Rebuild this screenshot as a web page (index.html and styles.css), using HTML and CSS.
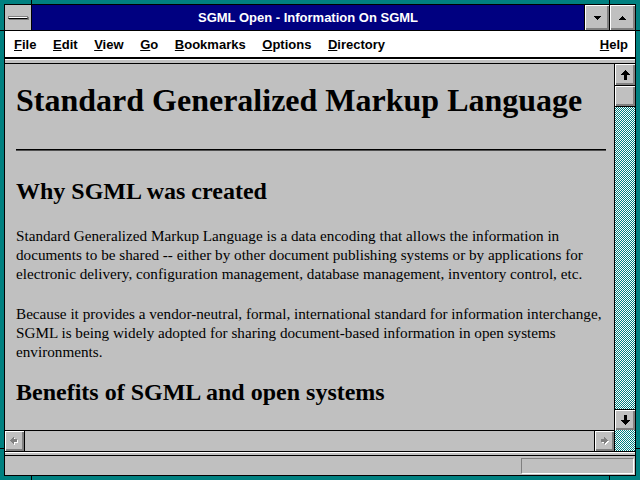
FILE: index.html
```html
<!DOCTYPE html>
<html>
<head>
<meta charset="utf-8">
<title>SGML Open - Information On SGML</title>
<link rel="stylesheet" href="styles.css">
</head>
<body>
<div class="frame">
  <span class="mark mark-v mark-tl"></span>
  <span class="mark mark-v mark-tr"></span>
  <span class="mark mark-v mark-bl"></span>
  <span class="mark mark-v mark-br"></span>
  <span class="mark mark-h mark-lt"></span>
  <span class="mark mark-h mark-rt"></span>
  <span class="mark mark-h mark-lb"></span>
  <span class="mark mark-h mark-rb"></span>
  <div class="window">
    <div class="titlebar">
      <div class="sysbtn"><span class="sysbar"></span></div>
      <div class="title">SGML Open - Information On SGML</div>
      <div class="tbtn"><svg width="7" height="4" viewBox="0 0 7 4" shape-rendering="crispEdges"><path d="M0 0H7V1H6V2H5V3H4V4H3V3H2V2H1V1H0Z" fill="#000"/></svg></div>
      <div class="tbtn tbtn-max"><svg width="7" height="4" viewBox="0 0 7 4" shape-rendering="crispEdges"><path d="M3 0H4V1H5V2H6V3H7V4H0V3H1V2H2V1H3Z" fill="#000"/></svg></div>
    </div>
    <div class="menubar">
      <span class="mi"><u>F</u>ile</span>
      <span class="mi"><u>E</u>dit</span>
      <span class="mi"><u>V</u>iew</span>
      <span class="mi"><u>G</u>o</span>
      <span class="mi"><u>B</u>ookmarks</span>
      <span class="mi"><u>O</u>ptions</span>
      <span class="mi"><u>D</u>irectory</span>
      <span class="mi mi-help"><u>H</u>elp</span>
    </div>
    <div class="sep"></div>
    <div class="main">
      <div class="left">
        <div class="content">
          <h1>Standard Generalized Markup Language</h1>
          <hr>
          <h2 class="h2-first">Why SGML was created</h2>
          <p>Standard Generalized Markup Language is a data encoding that allows the information in documents to be shared -- either by other document publishing systems or by applications for electronic delivery, configuration management, database management, inventory control, etc.</p>
          <p>Because it provides a vendor-neutral, formal, international standard for information interchange, SGML is being widely adopted for sharing document-based information in open systems environments.</p>
          <h2 class="h2-next">Benefits of SGML and open systems</h2>
        </div>
        <div class="hscroll">
          <div class="btn3d hbtn hbtn-l"><svg width="9" height="8" viewBox="0 0 9 8" shape-rendering="crispEdges"><path d="M4 1H5V3H8V6H5V8H4V7H3V6H2V5H1V4H2V3H3V2H4Z" fill="#fff"/><path d="M3 0H4V2H7V5H4V7H3V6H2V5H1V4H0V3H1V2H2V1H3Z" fill="#808080"/></svg></div>
          <div class="htrack"></div>
          <div class="btn3d hbtn hbtn-r"><svg width="9" height="8" viewBox="0 0 9 8" shape-rendering="crispEdges"><path d="M5 1H6V2H7V3H8V4H9V5H8V6H7V7H6V8H5V6H2V3H5Z" fill="#fff"/><path d="M4 0H5V1H6V2H7V3H8V4H7V5H6V6H5V7H4V5H1V2H4Z" fill="#808080"/></svg></div>
        </div>
      </div>
      <div class="vscroll">
        <div class="btn3d vbtn vbtn-up"><svg width="9" height="10" viewBox="0 0 9 10" shape-rendering="crispEdges"><path d="M4 0H5V1H6V2H7V3H8V4H9V5H6V10H3V5H0V4H1V3H2V2H3V1H4Z" fill="#000"/></svg></div>
        <div class="btn3d thumb"></div>
        <div class="dither vtrack"></div>
        <div class="btn3d vbtn vbtn-down"><svg width="9" height="10" viewBox="0 0 9 10" shape-rendering="crispEdges"><path d="M3 0H6V5H9V6H8V7H7V8H6V9H5V10H4V9H3V8H2V7H1V6H0V5H3Z" fill="#000"/></svg></div>
        <div class="dither corner"></div>
      </div>
    </div>
    <div class="sep2"></div>
    <div class="status"><div class="statbox"></div></div>
  </div>
</div>
</body>
</html>
```

FILE: styles.css
```css
html, body {
  margin: 0;
  padding: 0;
}
body {
  width: 640px;
  height: 480px;
  overflow: hidden;
  font-family: "Liberation Sans", Arial, sans-serif;
}
.frame {
  position: relative;
  width: 640px;
  height: 480px;
  box-sizing: border-box;
  padding: 4px;
  background: #008080;
}
.mark {
  position: absolute;
  background: #000;
}
.mark-v { width: 1px; height: 4px; }
.mark-h { width: 4px; height: 1px; }
.mark-tl { left: 31px; top: 0; }
.mark-tr { left: 609px; top: 0; }
.mark-bl { left: 31px; bottom: 0; }
.mark-br { left: 609px; bottom: 0; }
.mark-lt { left: 0; top: 30px; }
.mark-rt { right: 0; top: 30px; }
.mark-lb { left: 0; top: 448px; }
.mark-rb { right: 0; top: 448px; }

.window {
  box-sizing: border-box;
  width: 632px;
  height: 472px;
  border: 1px solid #000;
  background: #c0c0c0;
  display: flex;
  flex-direction: column;
}

/* title bar */
.titlebar {
  flex: none;
  height: 25px;
  display: flex;
  border-bottom: 1px solid #000;
}
.sysbtn {
  width: 26px;
  border-right: 1px solid #000;
  background: #c0c0c0;
  display: flex;
  align-items: center;
  justify-content: center;
}
.sysbar {
  width: 18px;
  height: 1px;
  background: #fff;
  border: 1px solid #808080;
  border-bottom-color: #000;
  box-shadow: 1px 1px 0 #808080;
  margin-top: -1px;
}
.title {
  flex: 1;
  background: #000080;
  color: #fff;
  font-weight: bold;
  font-size: 13px;
  display: flex;
  align-items: center;
  justify-content: center;
}
.tbtn {
  width: 24px;
  border-left: 1px solid #000;
  background: #c0c0c0;
  box-shadow: inset 1px 1px #fff, inset -1px -1px #808080, inset -2px -2px #808080;
  display: flex;
  align-items: center;
  justify-content: center;
}
.tbtn-max { width: 25px; }

/* menu bar */
.menubar {
  flex: none;
  height: 26px;
  background: #fff;
  border-bottom: 2px solid #000;
  display: flex;
  align-items: center;
  padding: 0 7px 0 9px;
  font-weight: bold;
  font-size: 13px;
  color: #000;
}
.mi { margin-right: 16.6px; }
.mi-help { margin-left: auto; margin-right: 0; }

.sep {
  flex: none;
  height: 4px;
  background: #c0c0c0;
  box-shadow: inset 0 1px #fff;
  border-bottom: 1px solid #000;
}

/* main area */
.main {
  flex: none;
  height: 387px;
  display: flex;
}
.left {
  flex: 1;
  min-width: 0;
  display: flex;
  flex-direction: column;
}
.content {
  height: 366px;
  overflow: hidden;
  padding: 0 8px 0 11px;
  font-family: "Liberation Serif", "Times New Roman", serif;
  color: #000;
  background: #c0c0c0;
}
.content h1 {
  margin: 18px 0 0;
  font-size: 32px;
  line-height: 36px;
  font-weight: bold;
}
.content hr {
  margin: 31px 0 0;
  height: 0;
  border: 0;
  border-top: 1px solid #000;
  border-bottom: 1px solid #505050;
}
.content h2 {
  font-size: 24px;
  line-height: 28px;
  font-weight: bold;
  margin: 0;
}
.h2-first { margin-top: 26px !important; }
.h2-next { margin-top: 17px !important; }
.content p {
  margin: 21px 0 0;
  font-size: 15.2px;
  line-height: 19px;
}

.btn3d {
  background: #c0c0c0;
  box-shadow: inset 1px 1px #fff, inset -1px -1px #808080, inset -2px -2px #808080;
  display: flex;
  align-items: center;
  justify-content: center;
}
.hscroll {
  height: 20px;
  border-top: 1px solid #000;
  display: flex;
}
.hbtn { width: 19px; }
.hbtn-l { border-right: 1px solid #000; }
.hbtn-r { border-left: 1px solid #000; }
.htrack { flex: 1; background: #c0c0c0; }

.vscroll {
  width: 20px;
  border-left: 1px solid #000;
  display: flex;
  flex-direction: column;
}
.vbtn-up { height: 21px; border-bottom: 1px solid #000; flex: none; }
.thumb { height: 20px; border-bottom: 1px solid #000; flex: none; }
.vtrack { flex: 1; }
.vbtn-down { height: 20px; border-top: 1px solid #000; flex: none; }
.corner { height: 21px; flex: none; }
.dither {
  background-color: #fff;
  background-image: repeating-conic-gradient(#008080 0 25%, #ffffff 0 50%);
  background-size: 2px 2px;
}

.sep2 {
  flex: none;
  height: 3px;
  border-top: 1px solid #000;
  border-bottom: 1px solid #000;
  background: #c0c0c0;
  box-shadow: inset 0 1px #fff;
}
.status {
  flex: 1;
  display: flex;
  justify-content: flex-end;
  padding: 2px 1px 1px 0;
}
.statbox {
  box-sizing: border-box;
  width: 113px;
  height: 16px;
  border: 1px solid;
  border-color: #808080 #fff #fff #808080;
}
```
